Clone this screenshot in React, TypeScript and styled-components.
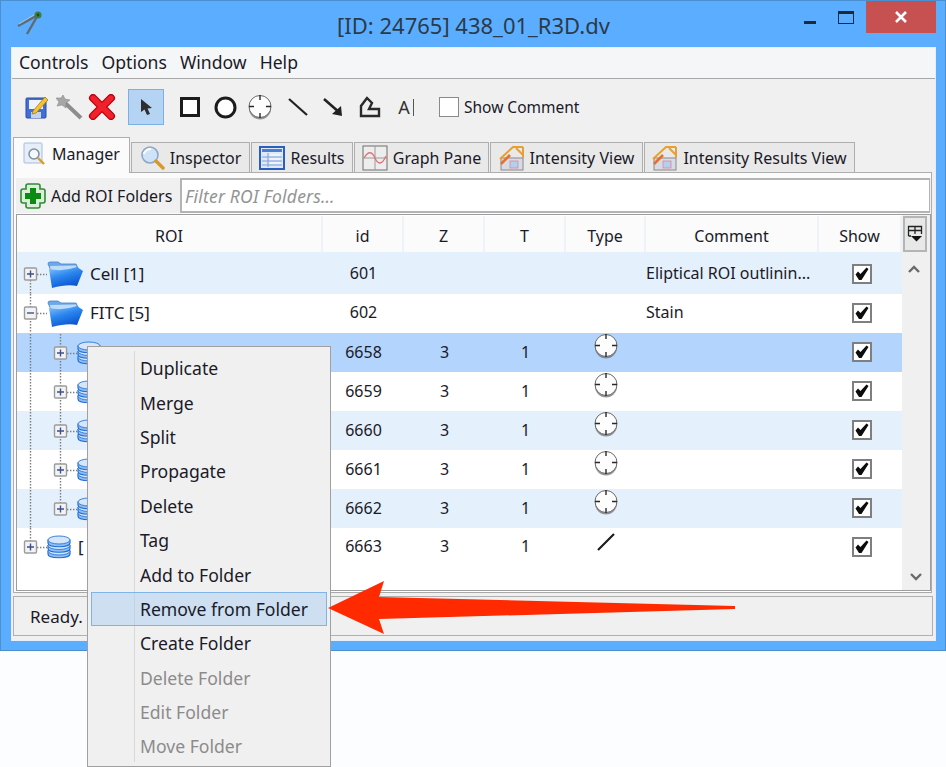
import React from 'react';
import styled, { createGlobalStyle } from 'styled-components';

const GlobalStyle = createGlobalStyle`
  html, body { margin: 0; padding: 0; background: #fbfdff; }
  body { font-family: "Noto Sans", "Liberation Sans", sans-serif; color: #1a1a28; }
  * { box-sizing: border-box; }
`;

type Row = {
  level: 0 | 1;
  kind: 'folder' | 'db';
  open?: boolean;
  label?: string;
  id: string;
  z?: string;
  t?: string;
  type?: 'target' | 'line';
  comment?: string;
  tone: 'alt' | 'plain' | 'selected';
  through: boolean;
  first?: boolean;
};

const rows: Row[] = [
  { level: 0, kind: 'folder', label: 'Cell [1]', id: '601', comment: 'Eliptical ROI outlinin...', tone: 'alt', through: true, first: true },
  { level: 0, kind: 'folder', open: true, label: 'FITC [5]', id: '602', comment: 'Stain', tone: 'plain', through: true },
  { level: 1, kind: 'db', label: '[1]', id: '6658', z: '3', t: '1', type: 'target', tone: 'selected', through: true },
  { level: 1, kind: 'db', id: '6659', z: '3', t: '1', type: 'target', tone: 'plain', through: true },
  { level: 1, kind: 'db', id: '6660', z: '3', t: '1', type: 'target', tone: 'alt', through: true },
  { level: 1, kind: 'db', id: '6661', z: '3', t: '1', type: 'target', tone: 'plain', through: true },
  { level: 1, kind: 'db', id: '6662', z: '3', t: '1', type: 'target', tone: 'alt', through: false },
  { level: 0, kind: 'db', label: '[', id: '6663', z: '3', t: '1', type: 'line', tone: 'plain', through: false },
];

const menuItems = [
  { label: 'Duplicate' },
  { label: 'Merge' },
  { label: 'Split' },
  { label: 'Propagate' },
  { label: 'Delete' },
  { label: 'Tag' },
  { label: 'Add to Folder' },
  { label: 'Remove from Folder', active: true },
  { label: 'Create Folder' },
  { label: 'Delete Folder', off: true },
  { label: 'Edit Folder', off: true },
  { label: 'Move Folder', off: true },
];

const AppIcon = () => (
  <svg width="28" height="28" viewBox="0 0 28 28">
    <path d="M23 6 L3 17" stroke="#5f6a72" strokeWidth="2.4" />
    <path d="M23 6 L12 25" stroke="#5f6a72" strokeWidth="2.4" />
    <path d="M22 4 L4 15" stroke="#c2c9ce" strokeWidth="0.8" />
    <circle cx="23" cy="6" r="3.6" fill="#3f7d46" />
    <circle cx="23" cy="6" r="1.4" fill="#174f1e" />
  </svg>
);

const EditIcon = () => (
  <svg width="24" height="26" viewBox="0 0 24 26">
    <rect x="1" y="4" width="20" height="20" rx="1" fill="#3f6fd8" stroke="#2a4da0" />
    <rect x="4" y="6" width="14" height="9" fill="#eef3fb" />
    <rect x="6" y="18" width="10" height="6" fill="#c5d3ea" />
    <path d="M8 17 L20 3 L23 6 L11 19 L7 20 Z" fill="#f4c430" stroke="#a97a10" strokeWidth="0.8" />
  </svg>
);

const WandIcon = () => (
  <svg width="28" height="26" viewBox="0 0 28 26">
    <path d="M9 8 L26 24" stroke="#8d8d8d" strokeWidth="4" />
    <path d="M8 1 L10 5 L15 6 L11 9 L11 14 L7 11 L2 12 L4 8 L1 4 L6 4 Z" fill="#a6a6a6" stroke="#8a8a8a" strokeWidth="0.6" />
  </svg>
);

const RedXIcon = () => (
  <svg width="28" height="26" viewBox="0 0 28 26">
    <path d="M5 4 L23 22 M23 4 L5 22" stroke="#b8000c" strokeWidth="8" strokeLinecap="round" />
    <path d="M5 4 L23 22 M23 4 L5 22" stroke="#f2202c" strokeWidth="5.4" strokeLinecap="round" />
  </svg>
);

const PointerIcon = () => (
  <svg width="16" height="18" viewBox="0 0 16 18">
    <path d="M3 1 L14 10 L9.5 10.5 L12 16 L9 17 L6.5 11.5 L3 14 Z" fill="#2e2e2e" />
  </svg>
);

const RectIcon = () => (
  <svg width="20" height="20" viewBox="0 0 20 20">
    <rect x="1.5" y="1.5" width="17" height="17" fill="#fff" stroke="#1c1c1c" strokeWidth="3" />
  </svg>
);

const CircleIcon = () => (
  <svg width="23" height="23" viewBox="0 0 23 23">
    <circle cx="11.5" cy="11.5" r="9.5" fill="#fff" stroke="#1c1c1c" strokeWidth="3" />
  </svg>
);

const TargetIcon = () => (
  <svg width="26" height="26" viewBox="0 0 26 26">
    <circle cx="13" cy="14.5" r="11" fill="#6a6a6a" opacity="0.7" />
    <circle cx="13" cy="12.5" r="11" fill="#fdfdfd" stroke="#666" strokeWidth="1" />
    <path d="M13 1 V6 M13 19 V24 M2 12.5 H7 M19 12.5 H24" stroke="#2a2a2a" strokeWidth="1.4" />
  </svg>
);

const LineIcon = () => (
  <svg width="22" height="20" viewBox="0 0 22 20">
    <path d="M2 2 L20 18" stroke="#222" strokeWidth="2.2" />
  </svg>
);

const ArrowIcon = () => (
  <svg width="22" height="20" viewBox="0 0 22 20">
    <path d="M2 2 L18 16" stroke="#222" strokeWidth="2.6" />
    <path d="M20 19 L19 9 L10 17 Z" fill="#222" />
  </svg>
);

const PolyIcon = () => (
  <svg width="22" height="22" viewBox="0 0 22 22">
    <path d="M8 2 L2 10 L2 20 L20 20 L20 13 L10 13 L13 7 Z" fill="none" stroke="#2a2a2a" strokeWidth="2.4" />
  </svg>
);

const FolderIcon = () => (
  <svg width="37" height="28" viewBox="0 0 37 28">
    <defs>
      <linearGradient id="folderFront" x1="0" y1="0" x2="0.5" y2="1">
        <stop offset="0" stopColor="#8cc4fa" />
        <stop offset="0.5" stopColor="#2a86ee" />
        <stop offset="1" stopColor="#0a55d0" />
      </linearGradient>
    </defs>
    <path d="M1 3 Q1 1 3 1 L11 1 L14 3 L29 3 L31 7 L31 14 L6 14 Z" fill="#6ea8e8" stroke="#3f80d0" strokeWidth="0.8" />
    <path d="M3 5 L29 4.5 L30 9 L4 11 Z" fill="#bcdcfa" />
    <path d="M5 27 L2 8 Q16 11 30 6 L36 10 L30 25 Q20 23 5 27 Z" fill="url(#folderFront)" />
  </svg>
);

const DbIcon = () => (
  <svg width="24" height="25" viewBox="0 0 24 25">
    {[16, 10.5, 5].map((y) => (
      <g key={y}>
        <path d={`M1 ${y} V${y + 3} C1 ${y + 8} 23 ${y + 8} 23 ${y + 3} V${y} Z`} fill="#8fbdf2" stroke="#1f6fd8" strokeWidth="1.2" />
        <ellipse cx="12" cy={y} rx="11" ry="4" fill="#d5e6fa" stroke="#3a82dc" strokeWidth="1" />
      </g>
    ))}
  </svg>
);

const ManagerIcon = () => (
  <svg width="24" height="26" viewBox="0 0 24 26">
    <rect x="1" y="2" width="18" height="20" rx="1" fill="#e6eef8" stroke="#a8bcd8" />
    <circle cx="11" cy="13" r="5" fill="#f5f8fc" stroke="#7f8fa5" strokeWidth="1.5" />
    <path d="M15 17 L21 23" stroke="#d89a2a" strokeWidth="2.4" />
  </svg>
);

const InspectorIcon = () => (
  <svg width="25" height="26" viewBox="0 0 25 26">
    <circle cx="10" cy="10" r="8" fill="#cfe3f8" stroke="#8fa8c4" strokeWidth="1.6" />
    <path d="M3.6 9 Q6 4 11 4" stroke="#fff" strokeWidth="2" fill="none" />
    <path d="M16 16 L23 23" stroke="#d8982a" strokeWidth="3.4" strokeLinecap="round" />
  </svg>
);

const ResultsIcon = () => (
  <svg width="26" height="24" viewBox="0 0 26 24">
    <rect x="1" y="1" width="24" height="22" fill="#dfe9f7" stroke="#2a5fc0" strokeWidth="2" />
    <rect x="3" y="3" width="20" height="3" fill="#4a7fd8" />
    <path d="M9 7 V21 M3 11 H23 M3 15 H23 M3 19 H23" stroke="#7d9fd8" strokeWidth="1" />
    <path d="M11 9 H21 M11 13 H21 M11 17 H21" stroke="#fff" strokeWidth="1" />
  </svg>
);

const GraphIcon = () => (
  <svg width="26" height="26" viewBox="0 0 26 26">
    <rect x="1" y="1" width="24" height="24" fill="#ededed" stroke="#6f6f6f" />
    <path d="M13 1 V25 M1 13 H25" stroke="#9a9a9a" strokeWidth="1" />
    <path d="M2 13 C6 6 10 6 13 13 C16 20 20 20 24 11" stroke="#e0707a" strokeWidth="1.3" fill="none" />
  </svg>
);

const IntensityIcon = () => (
  <svg width="26" height="26" viewBox="0 0 26 26">
    <rect x="2" y="13" width="22" height="12" fill="#d6dbe6" stroke="#8a8a8a" />
    <rect x="11" y="16" width="8" height="7" fill="#b5cdf0" stroke="#d88a92" strokeWidth="0.8" />
    <path d="M1 14 L14 2 L24 2" stroke="#e8a030" strokeWidth="2" fill="none" />
    <path d="M24 2 V13 M17 3 L24 10" stroke="#e8a030" strokeWidth="2" fill="none" />
    <path d="M2 19 L11 10" stroke="#e8702a" strokeWidth="2.6" />
  </svg>
);

const PlusIcon = () => (
  <svg width="26" height="26" viewBox="0 0 26 26">
    <path d="M8 1 H18 Q20 1 20 3 V6 H23 Q25 6 25 8 V18 Q25 20 23 20 H20 V23 Q20 25 18 25 H8 Q6 25 6 23 V20 H3 Q1 20 1 18 V8 Q1 6 3 6 H6 V3 Q6 1 8 1 Z" fill="#d9efd8" stroke="#2f8a36" strokeWidth="1.6" />
    <path d="M13 5 V21 M5 13 H21" stroke="#0d8a14" strokeWidth="6" />
  </svg>
);

const ColumnMenuIcon = () => (
  <svg width="16" height="18" viewBox="0 0 16 18">
    <path d="M1.5 11 V1.5 H14.5 V9 M1.5 5.5 H14.5 M8 1.5 V9 M1.5 11 H4" fill="none" stroke="#222" strokeWidth="1.3" />
    <path d="M4 11 H15 L9.5 16.5 Z" fill="#111" />
  </svg>
);

const Chevron = ({ up }: { up?: boolean }) => (
  <svg width="14" height="10" viewBox="0 0 14 10">
    <path d={up ? 'M2 8 L7 3 L12 8' : 'M2 2 L7 7 L12 2'} fill="none" stroke="#6a6a6a" strokeWidth="2.4" />
  </svg>
);

const CheckIcon = () => (
  <svg width="14" height="14" viewBox="0 0 14 14">
    <path d="M0.5 7.5 L3 4.5 L5.5 7 L11.5 0.5 L13.5 2 L6.5 13 L4 13 Z" fill="#0c0c0c" />
  </svg>
);

const TreeGuide = ({ row }: { row: Row }) => {
  const boxX = row.level === 0 ? 7 : 37;
  const cx = boxX + 6.5;
  const end = row.level === 0 ? 30 : 60;
  const dots = { stroke: '#7c7c7c', strokeWidth: 1.4, strokeDasharray: '1.4 1.6' };
  const outerTop = row.first ? 19 : 0;
  const outerBottom = row.through ? 39 : 19;
  return (
    <svg width={end} height="39" viewBox={`0 0 ${end} 39`}>
      {row.level === 0 && <line x1={cx} y1={outerTop} x2={cx} y2={outerBottom} {...dots} />}
      {row.level === 1 && (
        <>
          <line x1="13.5" y1="0" x2="13.5" y2="39" {...dots} />
          <line x1={cx} y1="0" x2={cx} y2={outerBottom} {...dots} />
        </>
      )}
      {row.open && <line x1="43.5" y1="30" x2="43.5" y2="39" {...dots} />}
      <line x1={boxX + 13} y1="19.5" x2={end} y2="19.5" {...dots} />
      <rect x={boxX + 0.5} y="13" width="12" height="12" rx="1" fill="#f3f3f3" stroke="#9c9c9c" strokeWidth="1.4" />
      <path d={row.open ? `M${boxX + 3} 19 H${boxX + 10}` : `M${boxX + 3} 19 H${boxX + 10} M${cx} 15.5 V22.5`} stroke="#3c4f90" strokeWidth="1.4" />
    </svg>
  );
};

const tabs = [
  { label: 'Manager', width: 117, icon: <ManagerIcon />, active: true },
  { label: 'Inspector', width: 119, icon: <InspectorIcon /> },
  { label: 'Results', width: 102, icon: <ResultsIcon /> },
  { label: 'Graph Pane', width: 135, icon: <GraphIcon /> },
  { label: 'Intensity View', width: 153, icon: <IntensityIcon /> },
  { label: 'Intensity Results View', width: 211, icon: <IntensityIcon /> },
];

export default function App() {
  return (
    <Page>
      <GlobalStyle />
      <Window>
        <TitleBar>
          <AppSlot><AppIcon /></AppSlot>
          <Title>[ID: 24765] 438_01_R3D.dv</Title>
          <Caption>
            <MinButton />
            <MaxButton />
            <CloseButton>
              <svg width="14" height="14" viewBox="0 0 14 14">
                <path d="M2 2 L12 12 M12 2 L2 12" stroke="#fff" strokeWidth="2.6" />
              </svg>
            </CloseButton>
          </Caption>
        </TitleBar>
        <Body>
          <MenuBar>
            {['Controls', 'Options', 'Window', 'Help'].map((m) => (
              <MenuTitle key={m}>{m}</MenuTitle>
            ))}
          </MenuBar>
          <Toolbar>
            <ToolSlot $w={27}><EditIcon /></ToolSlot>
            <ToolSlot $w={38}><WandIcon /></ToolSlot>
            <ToolSlot $w={28}><RedXIcon /></ToolSlot>
            <PressedTool><PointerIcon /></PressedTool>
            <ToolSlot $w={35} $ml={8}><RectIcon /></ToolSlot>
            <ToolSlot $w={36}><CircleIcon /></ToolSlot>
            <ToolSlot $w={34}><TargetIcon /></ToolSlot>
            <ToolSlot $w={42}><LineIcon /></ToolSlot>
            <ToolSlot $w={28}><ArrowIcon /></ToolSlot>
            <ToolSlot $w={46}><PolyIcon /></ToolSlot>
            <TextTool>A<Caret /></TextTool>
            <ToolCheck />
            <ToolLabel>Show Comment</ToolLabel>
          </Toolbar>
          <TabStrip>
            {tabs.map((t) => (
              <Tab key={t.label} $active={t.active} $w={t.width}>
                {t.icon}
                <span>{t.label}</span>
              </Tab>
            ))}
          </TabStrip>
          <Pane>
            <FilterRow>
              <AddButton>
                <PlusIcon />
                <span>Add ROI Folders</span>
              </AddButton>
              <FilterInput>Filter ROI Folders…</FilterInput>
            </FilterRow>
            <Table>
              <Columns>
                <HeaderRow>
                  {['ROI', 'id', 'Z', 'T', 'Type', 'Comment', 'Show'].map((h) => (
                    <HeaderCell key={h}>{h}</HeaderCell>
                  ))}
                </HeaderRow>
                {rows.map((r) => (
                  <DataRow key={r.id} $tone={r.tone} $first={r.first}>
                    <TreeCell>
                      <TreeGuide row={r} />
                      {r.kind === 'folder' ? <FolderIcon /> : <DbIcon />}
                      {r.label && <TreeLabel $wide={r.kind === 'folder'}>{r.label}</TreeLabel>}
                    </TreeCell>
                    <Cell>{r.id}</Cell>
                    <Cell>{r.z}</Cell>
                    <Cell>{r.t}</Cell>
                    <IconCell>
                      {r.type === 'target' && <TypeIcon $lift={14}><TargetIcon /></TypeIcon>}
                      {r.type === 'line' && (
                        <TypeIcon $lift={11}>
                          <svg width="20" height="18" viewBox="0 0 20 18">
                            <path d="M2 17 L18 1" stroke="#1a1a1a" strokeWidth="2.2" />
                          </svg>
                        </TypeIcon>
                      )}
                    </IconCell>
                    <CommentCell>{r.comment}</CommentCell>
                    <ShowCell>
                      <CheckBox><CheckIcon /></CheckBox>
                    </ShowCell>
                  </DataRow>
                ))}
              </Columns>
              <ScrollTrack>
                <CornerButton><ColumnMenuIcon /></CornerButton>
                <ScrollUp><Chevron up /></ScrollUp>
                <ScrollDown><Chevron /></ScrollDown>
              </ScrollTrack>
            </Table>
          </Pane>
          <StatusBar>Ready.</StatusBar>
        </Body>
      </Window>
      <ContextMenu>
        {menuItems.map((m) => (
          <MenuItem key={m.label} $active={m.active} $off={m.off}>{m.label}</MenuItem>
        ))}
      </ContextMenu>
      <CalloutArrow viewBox="0 0 420 60" width="420" height="60">
        <polygon points="3,28 59,1 54,17 410,26 410,29 54,39 59,54" fill="#ff2a00" />
      </CalloutArrow>
    </Page>
  );
}

const Page = styled.div`
  position: relative;
  width: 946px;
  height: 767px;
  overflow: hidden;
`;

const Window = styled.div`
  width: 946px;
  height: 651px;
  display: flex;
  flex-direction: column;
  background: #5baeff;
  border: 1px solid #4a8fd0;
  padding: 0 10px 10px 11px;
`;

const TitleBar = styled.div`
  height: 47px;
  flex: none;
  display: grid;
  grid-template-columns: 1fr auto 1fr;
`;

const AppSlot = styled.div`
  padding: 8px 0 0 3px;
`;

const Title = styled.div`
  padding-top: 9px;
  font-size: 22px;
  line-height: 30px;
  color: #2c3a48;
`;

const Caption = styled.div`
  display: flex;
  justify-content: flex-end;
  margin-right: -1px;
`;

const MinButton = styled.div`
  width: 12px;
  height: 3px;
  margin: 20px 22px 0 0;
  background: #1c2a38;
`;

const MaxButton = styled.div`
  width: 16px;
  height: 13px;
  margin: 10px 12px 0 0;
  border: 1px solid #1c2a38;
  border-top-width: 3px;
`;

const CloseButton = styled.div`
  width: 70px;
  height: 32px;
  background: #c75050;
  display: flex;
  align-items: center;
  justify-content: center;
`;

const Body = styled.div`
  flex: 1;
  display: flex;
  flex-direction: column;
  background: #f0f0f0;
  padding-bottom: 4px;
  box-shadow: 0 0 0 1px #e8eef5;
`;

const MenuBar = styled.div`
  height: 31px;
  flex: none;
  display: flex;
  gap: 13px;
  align-items: center;
  padding: 0 0 2px 7px;
  background: #f5f6f7;
  border-bottom: 1px solid #a8a8a8;
`;

const MenuTitle = styled.div`
  font-size: 17.6px;
`;

const Toolbar = styled.div`
  height: 58px;
  flex: none;
  display: flex;
  align-items: center;
  padding: 0 0 2px 11px;
`;

const ToolSlot = styled.div<{ $w: number; $ml?: number }>`
  width: ${(p) => p.$w}px;
  margin-left: ${(p) => p.$ml ?? 0}px;
  display: flex;
  justify-content: center;
`;

const PressedTool = styled.div`
  width: 36px;
  height: 36px;
  margin-left: 12px;
  display: flex;
  align-items: center;
  justify-content: center;
  background: #b5d3f2;
  border: 1px solid #79b0e8;
`;

const TextTool = styled.div`
  width: 26px;
  display: flex;
  align-items: center;
  justify-content: center;
  gap: 3px;
  font-size: 18px;
  color: #333;
`;

const Caret = styled.span`
  width: 1px;
  height: 17px;
  background: #555;
`;

const ToolCheck = styled.div`
  width: 20px;
  height: 20px;
  margin-left: 20px;
  background: #fff;
  border: 1px solid #8a8a8a;
`;

const ToolLabel = styled.div`
  margin-left: 5px;
  font-size: 15.5px;
`;

const TabStrip = styled.div`
  height: 36px;
  flex: none;
  display: flex;
  align-items: flex-end;
  padding-left: 1px;
`;

const Tab = styled.div<{ $active?: boolean; $w: number }>`
  width: ${(p) => p.$w}px;
  height: ${(p) => (p.$active ? 36 : 31)}px;
  margin-right: 1px;
  display: flex;
  align-items: center;
  justify-content: center;
  gap: 5px;
  font-size: 16px;
  position: relative;
  z-index: ${(p) => (p.$active ? 1 : 0)};
  background: ${(p) => (p.$active ? '#fbfbfb' : '#e9e9e9')};
  border: 1px solid #aeaeae;
  border-bottom: ${(p) => (p.$active ? 'none' : '1px solid #aeaeae')};
  padding-bottom: ${(p) => (p.$active ? 3 : 0)}px;
`;

const Pane = styled.div`
  height: 421px;
  flex: none;
  margin: -1px 3px 0 1px;
  padding: 5px 0 0 2px;
  background: #fbfbfb;
  border: 1px solid #aeaeae;
`;

const FilterRow = styled.div`
  height: 35px;
  display: flex;
  background: #f0f0f0;
`;

const AddButton = styled.div`
  width: 164px;
  flex: none;
  display: flex;
  align-items: center;
  gap: 5px;
  padding-left: 4px;
  font-size: 16px;
`;

const FilterInput = styled.div`
  flex: 1;
  margin-right: 1px;
  display: flex;
  align-items: center;
  padding-left: 3px;
  font-size: 17.5px;
  letter-spacing: 0.2px;
  font-style: italic;
  color: #949494;
  background: #fff;
  border: 2px solid #b4b4b4;
  border-right-width: 1px;
`;

const Table = styled.div`
  width: 915px;
  height: 377px;
  margin-top: 1px;
  display: flex;
  background: #fff;
  border: 1px solid #9d9d9d;
  box-shadow: 0 1px 0 #fff, 0 2px 0 #a8a8a8;
`;

const Columns = styled.div`
  width: 885px;
  flex: none;
`;

const gridCols = `306px 81px 81px 81px 80px 173px 83px`;

const HeaderRow = styled.div`
  height: 36px;
  margin-top: 1px;
  display: grid;
  grid-template-columns: ${gridCols};
`;

const HeaderCell = styled.div`
  display: flex;
  align-items: center;
  justify-content: center;
  padding-top: 3px;
  font-size: 16px;
  background: #fbfbfb;
  border-right: 2px solid #eef3f9;
`;

const toneColor = { alt: '#e5f0fd', plain: '#ffffff', selected: '#b2d4fd' };

const DataRow = styled.div<{ $tone: Row['tone']; $first?: boolean }>`
  height: ${(p) => (p.$first ? 42 : 39)}px;
  padding-top: ${(p) => (p.$first ? 3 : 0)}px;
  display: grid;
  grid-template-columns: ${gridCols};
  background: ${(p) => toneColor[p.$tone]};
  font-size: 16px;
`;

const TreeCell = styled.div`
  display: flex;
  align-items: center;
`;

const TreeLabel = styled.span<{ $wide?: boolean }>`
  margin: 0 0 3px ${(p) => (p.$wide ? 6 : 7)}px;
  font-size: 17px;
  white-space: nowrap;
`;

const Cell = styled.div`
  display: flex;
  align-items: center;
  justify-content: center;
  padding-bottom: 3px;
`;

const IconCell = styled.div`
  display: flex;
  align-items: center;
  justify-content: center;
`;

const TypeIcon = styled.div<{ $lift: number }>`
  display: flex;
  margin-bottom: ${(p) => p.$lift}px;
`;

const CommentCell = styled.div`
  display: flex;
  align-items: center;
  padding-bottom: 3px;
  white-space: nowrap;
  overflow: hidden;
`;

const ShowCell = styled.div`
  display: flex;
  align-items: center;
  justify-content: center;
  padding: 0 0 2px 3px;
`;

const CheckBox = styled.div`
  width: 20px;
  height: 20px;
  display: flex;
  align-items: center;
  justify-content: center;
  background: #fff;
  border: 2px solid #7f7f7f;
`;

const ScrollTrack = styled.div`
  flex: 1;
  display: flex;
  flex-direction: column;
  align-items: center;
  background: #f0f0f0;
`;

const CornerButton = styled.div`
  width: 24px;
  height: 36px;
  margin: 1px 2px 0 0;
  display: flex;
  align-items: center;
  justify-content: center;
  background: #e8e8e8;
  border: 2px solid #b5b5b5;
`;

const ScrollUp = styled.div`
  display: flex;
  margin: 12px 4px 0 0;
`;

const ScrollDown = styled.div`
  display: flex;
  margin-top: auto;
  margin-bottom: 8px;
`;

const StatusBar = styled.div`
  height: 40px;
  flex: none;
  margin: 3px 2px 0 1px;
  display: flex;
  align-items: center;
  padding-left: 16px;
  font-size: 17px;
  background: #f0f0f0;
  border: 1px solid #b0b0b0;
`;

const ContextMenu = styled.div`
  position: absolute;
  left: 87px;
  top: 346px;
  width: 244px;
  height: 421px;
  padding: 4px 3px;
  background: #f0f0f0;
  border: 1px solid #a0a0a0;
  &::before {
    content: '';
    position: absolute;
    left: 46px;
    top: 4px;
    bottom: 4px;
    width: 1px;
    background: #d8d8d8;
  }
`;

const MenuItem = styled.div<{ $active?: boolean; $off?: boolean }>`
  position: relative;
  height: 34.4px;
  display: flex;
  align-items: center;
  padding-left: 48px;
  font-size: 17.6px;
  color: ${(p) => (p.$off ? '#8b8b8b' : '#1a1a28')};
  background: ${(p) => (p.$active ? 'rgba(170, 205, 240, 0.5)' : 'transparent')};
  border: 1px solid ${(p) => (p.$active ? '#7eb4ea' : 'transparent')};
`;

const CalloutArrow = styled.svg`
  position: absolute;
  left: 325px;
  top: 580px;
`;
